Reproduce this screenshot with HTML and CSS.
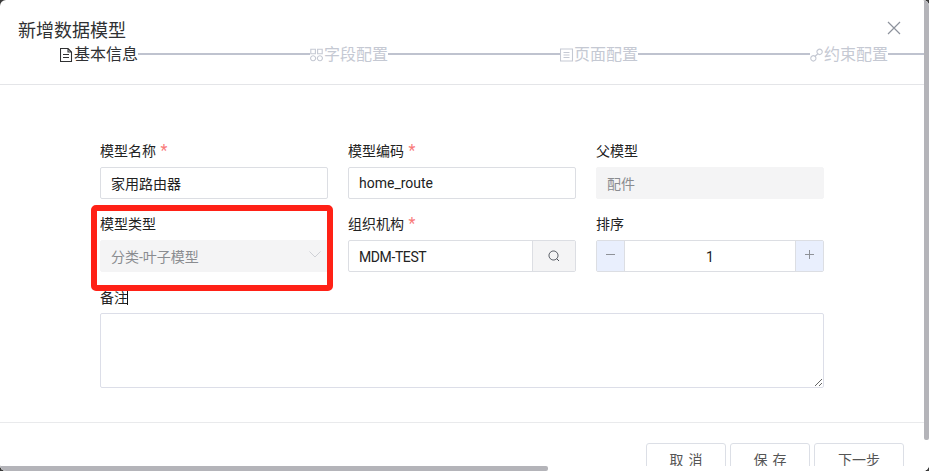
FILE: index.html
```html
<!DOCTYPE html>
<html lang="zh">
<head>
<meta charset="utf-8">
<title>新增数据模型</title>
<link rel="stylesheet" href="styles.css">
</head>
<body>
<div class="dialog">
  <header class="head">
    <h1 class="title">新增数据模型</h1>
    <svg class="close" viewBox="0 0 14 14" width="14" height="14"><path d="M1 1 13 13M13 1 1 13"/></svg>
    <div class="steps">
      <div class="step active">
        <svg class="step-icon" viewBox="0 0 14 14"><path d="M.5.5h7.500l3.500 3.500v9.500H.5zM8 .5v3.500h3.500M3 6.500h6M3 9.500h6"/></svg>
        <span>基本信息</span>
      </div>
      <div class="line"></div>
      <div class="step">
        <svg class="step-icon" viewBox="0 0 14 14"><path d="M.8 1.200h4.600v4.600H.8zM7.600 1.200h4.600v4.600H7.600zM3.100 7.800a2.500 2.500 0 1 0 .01 0zM9.900 7.800a2.500 2.500 0 1 0 .01 0z"/></svg>
        <span>字段配置</span>
      </div>
      <div class="line"></div>
      <div class="step">
        <svg class="step-icon" viewBox="0 0 14 14"><path d="M.5 1h12v12H.5zM3.500 4.500h6M3.500 7h6M3.500 9.500h6"/></svg>
        <span>页面配置</span>
      </div>
      <div class="line"></div>
      <div class="step">
        <svg class="step-icon" viewBox="0 0 14 14"><path d="M5 8.500 8 5.500M1.500 8.500a2.600 2.600 0 0 1 3.700 3.700 2.600 2.600 0 0 1-3.700-3.700zM7.800 2a2.600 2.600 0 0 1 3.700 3.700 2.600 2.600 0 0 1-3.700-3.700z"/></svg>
        <span>约束配置</span>
      </div>
      <div class="line line-end"></div>
    </div>
  </header>

  <main class="form">
    <div class="grid">
      <div class="field">
        <div class="label">模型名称 <em class="req">*</em></div>
        <div class="box">家用路由器</div>
      </div>
      <div class="field">
        <div class="label">模型编码 <em class="req">*</em></div>
        <div class="box">home_route</div>
      </div>
      <div class="field">
        <div class="label">父模型</div>
        <div class="box disabled">配件</div>
      </div>
      <div class="field">
        <div class="label">模型类型</div>
        <div class="box disabled select">
          <span>分类-叶子模型</span>
          <svg class="chev" viewBox="0 0 12 7" width="12" height="7"><path d="M.5.5 6 6l5.500-5.500"/></svg>
        </div>
      </div>
      <div class="field">
        <div class="label">组织机构 <em class="req">*</em></div>
        <div class="group">
          <div class="group-text">MDM-TEST</div>
          <div class="group-btn">
            <svg class="search" viewBox="0 0 12 12" width="12" height="12"><path d="M5.500 1a4.500 4.500 0 1 0 .01 0zM8.800 8.800 11 11"/></svg>
          </div>
        </div>
      </div>
      <div class="field">
        <div class="label">排序</div>
        <div class="stepper">
          <div class="stepper-btn minus"><svg class="sign" viewBox="0 0 9 9" width="9" height="9"><path d="M0 4.500h9"/></svg></div>
          <div class="stepper-val">1</div>
          <div class="stepper-btn plus"><svg class="sign" viewBox="0 0 9 9" width="9" height="9"><path d="M0 4.500h9M4.500 0v9"/></svg></div>
        </div>
      </div>
    </div>
    <div class="label label-remark">备注<i class="caret"></i></div>
    <textarea class="remark"></textarea>
  </main>

  <footer class="foot">
    <button class="btn" type="button">取 消</button>
    <button class="btn" type="button">保 存</button>
    <button class="btn btn-next" type="button">下一步</button>
  </footer>

  <div class="mark"></div>
  <div class="track-v"><div class="thumb-v"></div></div>
  <div class="track-h"><div class="thumb-h"></div></div>
</div>
</body>
</html>
```
FILE: styles.css
```css
html, body {
  margin: 0;
  height: 471px;
  overflow: hidden;
  background: #3a3a3a;
}
body {
  font-family: Roboto, "Noto Sans CJK SC", sans-serif;
  font-size: 14px;
  color: #303133;
}
.dialog {
  position: relative;
  height: 471px;
  overflow: hidden;
  background: #fff;
  border-radius: 6px;
}
.head {
  position: relative;
  border-bottom: 1px solid #e4e5e8;
  padding-top: 18px;
  height: 66px;
}
.title {
  margin: 0 0 2px 18px;
  font-size: 18px;
  line-height: 26px;
  font-weight: 400;
  color: #303133;
}
.close {
  position: absolute;
  top: 21px;
  right: 28px;
  fill: none;
  stroke: #8d929c;
  stroke-width: 1.200;
}
.steps {
  display: flex;
  align-items: center;
  height: 18px;
  padding-left: 60px;
}
.step {
  display: flex;
  align-items: center;
  flex: none;
  width: 78px;
  font-size: 16px;
  line-height: 18px;
  color: #c5c9d3;
}
.step.active { color: #303133; }
.step-icon {
  flex: none;
  width: 14px;
  height: 14px;
  fill: none;
  stroke: currentColor;
  stroke-width: 1.100;
}
.line {
  flex: none;
  width: 172px;
  height: 2px;
  margin-top: -2px;
  background: #bfc3cf;
}
.line-end { width: 36px; }
.form { padding: 56px 105px 0 100px; }
.grid {
  display: grid;
  grid-template-columns: repeat(3, 228px);
  column-gap: 20px;
  row-gap: 15px;
}
.label {
  height: 20px;
  line-height: 20px;
  margin-bottom: 6px;
  color: #222;
}
.req {
  font-style: normal;
  font-size: 16px;
  line-height: 1;
  margin-left: 1px;
  color: #f97a7a;
}
.box {
  display: flex;
  align-items: center;
  box-sizing: border-box;
  height: 32px;
  padding: 0 10px;
  border: 1px solid #dcdee3;
  border-radius: 2px;
  color: #222;
}
.box.disabled {
  background: #f4f4f5;
  border-color: #f4f4f5;
  color: #8a8c90;
}
.select { justify-content: space-between; padding-right: 6px; }
.chev {
  margin-top: -4px;
  fill: none;
  stroke: #cfd1d6;
}
.group {
  display: flex;
  box-sizing: border-box;
  height: 32px;
  border: 1px solid #dcdee3;
  border-radius: 2px;
}
.group-text {
  flex: 1;
  padding: 0 10px;
  line-height: 32px;
  letter-spacing: -.4px;
  color: #222;
}
.group-btn {
  display: flex;
  flex: none;
  align-items: center;
  justify-content: center;
  width: 42px;
  border-left: 1px solid #dcdee3;
  background: #f4f4f5;
}
.search { fill: none; stroke: #4a4f58; stroke-width: 1; }
.stepper {
  display: flex;
  box-sizing: border-box;
  height: 32px;
  border: 1px solid #dcdee3;
  border-radius: 2px;
}
.stepper-btn {
  display: flex;
  flex: none;
  align-items: center;
  justify-content: center;
  box-sizing: border-box;
  width: 28px;
  padding-bottom: 3px;
  background: #e9effd;
}
.minus { border-right: 1px solid #dcdee3; }
.plus { border-left: 1px solid #dcdee3; }
.sign { fill: none; stroke: #8f9298; stroke-width: 1; }
.stepper-val {
  flex: 1;
  line-height: 32px;
  text-align: center;
  color: #222;
}
.label-remark {
  margin-top: 16px;
  margin-bottom: 5px;
  position: relative;
}
.caret {
  position: absolute;
  left: 27px;
  top: 3px;
  width: 1px;
  height: 14px;
  background: #111;
}
.remark {
  display: block;
  box-sizing: border-box;
  width: 724px;
  height: 75px;
  margin: 0;
  padding: 6px 10px;
  border: 1px solid #dcdee8;
  border-radius: 2px;
  outline: none;
  resize: vertical;
  background: #fff;
}
.foot {
  display: flex;
  justify-content: flex-end;
  gap: 4px;
  margin-top: 34px;
  padding: 20px 25px 0 0;
  border-top: 1px solid #e9eaec;
}
.btn {
  flex: none;
  box-sizing: border-box;
  width: 80px;
  height: 34px;
  padding: 0 0 2px;
  border: 1px solid #dcdfe6;
  border-radius: 3px;
  background: #fff;
  font: inherit;
  word-spacing: 1.500px;
  color: #555;
}
.btn-next { width: 90px; }
.mark {
  position: absolute;
  left: 91px;
  top: 205px;
  box-sizing: border-box;
  width: 242px;
  height: 86px;
  border: 6px solid #ff2116;
  border-radius: 5px;
}
.track-v {
  position: absolute;
  top: 0;
  right: 0;
  width: 5px;
  height: 471px;
  background: #fff;
}
.thumb-v {
  height: 440px;
  background: #b4b4b9;
  border-radius: 0 0 2px 2px;
}
.track-h {
  position: absolute;
  left: 0;
  bottom: 0;
  width: 100%;
  height: 5px;
  background: #fff;
}
.thumb-h {
  width: 548px;
  height: 5px;
  background: #b4b4b9;
  border-radius: 0 2px 2px 0;
}
```
